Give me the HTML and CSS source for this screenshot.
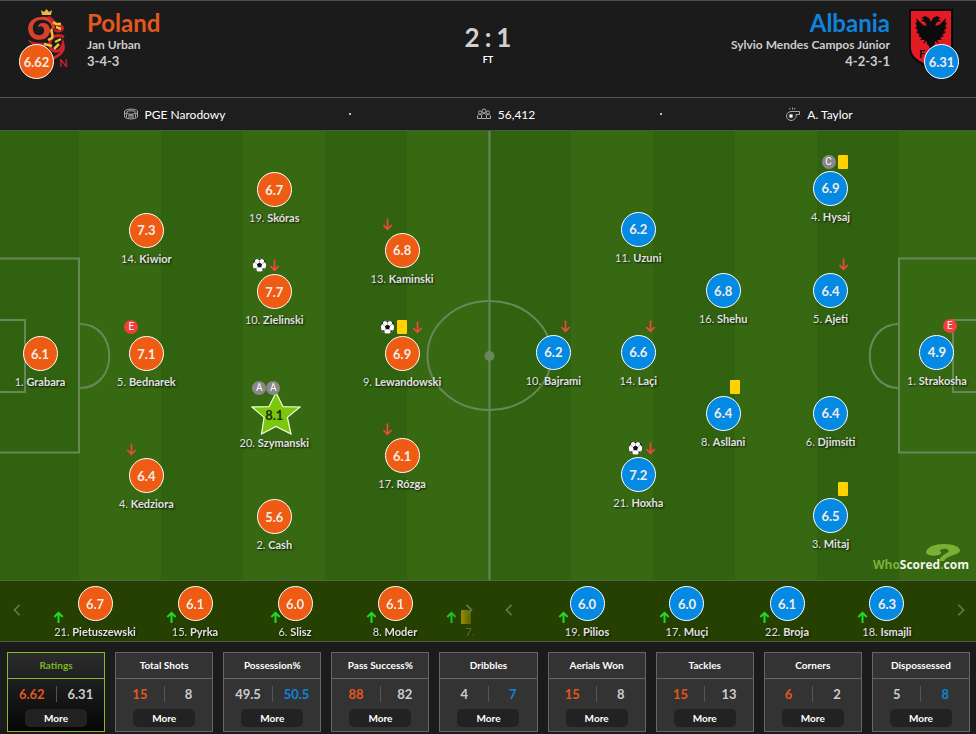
FILE: index.html
```html
<!DOCTYPE html>
<html lang="en">
<head>
  <meta charset="UTF-8">
  <meta name="viewport" content="width=device-width, initial-scale=1">
  <title>Poland 2:1 Albania</title>
  <link rel="stylesheet" href="styles.css">
</head>
<body>
  <!-- shared icons -->
  <svg class="sprite" aria-hidden="true">
    <symbol id="ball" viewBox="0 0 14 14">
      <circle cx="7" cy="7" r="6.6" fill="#fff"/>
      <path fill="#111" d="M7 4.4l2.6 1.9-1 3H5.4l-1-3zM4.6.9L7 2l2.4-1.1L7 .4zM.5 5.2L2.4 3.8 2.7 1.6.9 3.6zM13.5 5.2l-1.9-1.4-.3-2.2 1.8 2zM1.3 10.3l2.3.3.9 2.3-2.2-1.3zM12.7 10.3l-2.3.3-.9 2.3 2.2-1.3z"/>
      <path stroke="#666" stroke-width=".5" d="M7 2v2.4M2.4 3.8l2 2.5M11.6 3.8l-2 2.5M3.6 10.6l1.8-1.3M10.4 10.6L8.6 9.3"/>
    </symbol>
    <symbol id="down" viewBox="0 0 14 14">
      <path fill="none" stroke="#f0483a" stroke-width="1.7" d="M7 1.500v10.500M2.800 8L7 12.200 11.200 8"/>
    </symbol>
    <symbol id="up" viewBox="0 0 14 14">
      <path fill="none" stroke="#1fdc28" stroke-width="2" d="M7 13V3M2.800 7L7 2.800 11.200 7"/>
    </symbol>
    <symbol id="star" viewBox="0 0 50 44">
      <path fill="#7ac70c" stroke="#f2ffe0" stroke-width="1.2" d="M25 1.5l7 14.2 17 .3-12.6 10.4L40 43 25 35.5 10.5 43l2.6-16.6L1 16l17-.3z"/>
    </symbol>
  </svg>

  <header class="match-header">
    <div class="team">
      <div class="badge">
        <svg class="crest" viewBox="0 0 44 60" aria-label="Poland crest">
          <path fill="#f0b840" d="M17 1l3 2 2.500-3L25 3l3-2-1 5h-9z"/>
          <path fill="#d9402f" d="M17 8C7 8 2 16 5 24c3 8 14 9 19 3 4-5 2-13-5-13-3 0-5 2-5 4 4-2 7 1 6 5-2 5-10 4-11-2C8 15 12 10 20 11c6 1 8 5 8 10l3-2C31 11 26 7 17 8z"/>
          <path fill="#c81f2b" d="M24 7c5 0 6 6 11 8 4 1 5 2 5 5-1 4-8 5-11 1l2-1c2 2 6 1 6-1 0-2-9-1-13-12zM5 31c6 4 11 2 18 3l-2 5C14 36 8 38 4 31z"/>
          <path fill="none" stroke="#cf2330" stroke-width="3" d="M40 28c-6-3-13-1-14 5-1 5 1 9 5 9 4 1 7-3 8-7 2 7-4 12-12 15"/>
          <path fill="none" stroke="#f2c22e" stroke-width="2.500" d="M29 13l3 2 5 0M32 18l5 2M28 20c-2 3 2 5 0 9l-4 2M30 40l5-5M20 35l8 2M31 33l6-3"/>
          <text class="crest-text" x="35" y="58" fill="#c91f2d">N</text>
        </svg>
        <span class="rating home badge-rating">6.62</span>
      </div>
      <div class="team-info">
        <a href="#" class="team-name home-text">Poland</a>
        <div class="manager">Jan Urban</div>
        <div class="formation">3-4-3</div>
      </div>
    </div>

    <div class="result">
      <div class="score"><span>2</span><span>:</span><span>1</span></div>
      <div class="status">FT</div>
    </div>

    <div class="team away-team">
      <div class="badge">
        <svg class="crest" viewBox="0 0 44 60" aria-label="Albania crest">
          <path fill="#e51b23" stroke="#080808" stroke-width="2" d="M1 1h42v38c0 10-10 15-21 20C11 54 1 49 1 39z"/>
          <path fill="#0b0b0b" d="M22 13l-2-4-4-2-4 2 3 1-3 2 4 1 2 4-4-1-7-7 1 5-2-1 2 5-2 0 3 4-2 1 4 3-2 1 4 2-2 2 5 0-2 4 4-3 0 3 2 2 2 5 2-5 2-2 0-3 4 3-2-4 5 0-2-2 4-2-2-1 4-3-2-1 3-4-2 0 2-5-2 1 1-5-7 7-4 1 2-4 4-1-3-2 3-1-4-2-4 2z"/>
          <text class="crest-text" x="10" y="49" fill="#0b0b0b">F</text>
        </svg>
        <span class="rating away badge-rating">6.31</span>
      </div>
      <div class="team-info">
        <a href="#" class="team-name away-text">Albania</a>
        <div class="manager">Sylvio Mendes Campos Júnior</div>
        <div class="formation">4-2-3-1</div>
      </div>
    </div>
  </header>

  <section class="match-info">
    <div class="info-item">
      <svg class="info-icon" viewBox="0 0 14 12"><path d="M.5 3C3 .5 11 .5 13.500 3v6c-2.500 2.500-10.500 2.500-13 0zM3 3.500c2-1 6-1 8 0v2c-2 1-6 1-8 0zM.5 5l2.500 1M13.500 5L11 6M5 10V7h4v3M7 7v3M2.500 6.500v3M11.500 6.500v3"/></svg>
      <span>PGE Narodowy</span>
    </div>
    <span class="dot"></span>
    <div class="info-item">
      <svg class="info-icon" viewBox="0 0 14 12"><circle cx="7" cy="3" r="2"/><circle cx="3" cy="4.500" r="1.600"/><circle cx="11" cy="4.500" r="1.600"/><path d="M4.500 10.500V8c0-3.500 5-3.500 5 0v2.500zM4 10.500H.5V9c0-2.500 2-3 3.500-2.500M10 10.500h3.500V9c0-2.500-2-3-3.500-2.500"/></svg>
      <span>56,412</span>
    </div>
    <span class="dot"></span>
    <div class="info-item">
      <svg class="info-icon whistle" viewBox="0 0 14 14"><path d="M5 4.500h8.500v3H10c1 3-2 6-5 6C-1 13-1 5 5 4.500zM4 2.500L3.500 1M6.500 2.500V.5M8.500 2.500L9 1"/><circle cx="5" cy="9" r="1.800" fill="#fff"/></svg>
      <span>A. Taylor</span>
    </div>
  </section>

  <main class="pitch">
    <svg class="pitch-lines" viewBox="0 0 976 449" preserveAspectRatio="none" aria-hidden="true">
      <path d="M489.500 0v449M0 127.500h79v194H0M0 189h25v72H0M976 127.500h-77v194h77M976 189h-23v72h23"/>
      <path d="M80 193c39 0 39 64 0 64M899 193c-39 0-39 64 0 64"/>
      <ellipse cx="489.500" cy="224.500" rx="62" ry="54.500"/>
      <circle class="spot" cx="489.500" cy="225" r="5"/>
    </svg>

    <!-- Poland -->
    <div class="player" style="left: 4.1%; top: 45.7%">
      <span class="rating home">6.1</span>
      <div class="name">1. <b>Grabara</b></div>
    </div>
    <div class="player" style="left: 15%; top: 18.2%">
      <span class="rating home">7.3</span>
      <div class="name">14. <b>Kiwior</b></div>
    </div>
    <div class="player" style="left: 15%; top: 45.7%">
      <div class="events"><i class="tag error">E</i></div>
      <span class="rating home">7.1</span>
      <div class="name">5. <b>Bednarek</b></div>
    </div>
    <div class="player" style="left: 15%; top: 72.9%">
      <div class="events"><svg class="ico"><use href="#down"/></svg></div>
      <span class="rating home">6.4</span>
      <div class="name">4. <b>Kedziora</b></div>
    </div>
    <div class="player" style="left: 28.1%; top: 9.2%">
      <span class="rating home">6.7</span>
      <div class="name">19. <b>Skóras</b></div>
    </div>
    <div class="player" style="left: 28.1%; top: 31.9%">
      <div class="events"><svg class="ico"><use href="#ball"/></svg><svg class="ico"><use href="#down"/></svg></div>
      <span class="rating home">7.7</span>
      <div class="name">10. <b>Zielinski</b></div>
    </div>
    <div class="player" style="left: 28.1%; top: 59.3%">
      <svg class="star"><use href="#star"/></svg>
      <div class="events"><i class="tag">A</i><i class="tag">A</i></div>
      <span class="rating best">8.1</span>
      <div class="name">20. <b>Szymanski</b></div>
    </div>
    <div class="player" style="left: 28.1%; top: 82%">
      <span class="rating home">5.6</span>
      <div class="name">2. <b>Cash</b></div>
    </div>
    <div class="player" style="left: 41.2%; top: 22.7%">
      <div class="events"><svg class="ico"><use href="#down"/></svg></div>
      <span class="rating home">6.8</span>
      <div class="name">13. <b>Kaminski</b></div>
    </div>
    <div class="player" style="left: 41.2%; top: 45.7%">
      <div class="events"><svg class="ico"><use href="#ball"/></svg><i class="card"></i><svg class="ico"><use href="#down"/></svg></div>
      <span class="rating home">6.9</span>
      <div class="name">9. <b>Lewandowski</b></div>
    </div>
    <div class="player" style="left: 41.2%; top: 68.4%">
      <div class="events"><svg class="ico"><use href="#down"/></svg></div>
      <span class="rating home">6.1</span>
      <div class="name">17. <b>Rózga</b></div>
    </div>

    <!-- Albania -->
    <div class="player visitor" style="left: 96%; top: 45.4%">
      <div class="events"><i class="tag error">E</i></div>
      <span class="rating away">4.9</span>
      <div class="name">1. <b>Strakosha</b></div>
    </div>
    <div class="player visitor" style="left: 85.1%; top: 8.9%">
      <div class="events"><i class="tag">C</i><i class="card"></i></div>
      <span class="rating away">6.9</span>
      <div class="name">4. <b>Hysaj</b></div>
    </div>
    <div class="player visitor" style="left: 85.1%; top: 31.7%">
      <div class="events"><svg class="ico"><use href="#down"/></svg></div>
      <span class="rating away">6.4</span>
      <div class="name">5. <b>Ajeti</b></div>
    </div>
    <div class="player visitor" style="left: 85.1%; top: 59%">
      <span class="rating away">6.4</span>
      <div class="name">6. <b>Djimsiti</b></div>
    </div>
    <div class="player visitor" style="left: 85.1%; top: 81.8%">
      <div class="events"><i class="card"></i></div>
      <span class="rating away">6.5</span>
      <div class="name">3. <b>Mitaj</b></div>
    </div>
    <div class="player visitor" style="left: 74.1%; top: 31.7%">
      <span class="rating away">6.8</span>
      <div class="name">16. <b>Shehu</b></div>
    </div>
    <div class="player visitor" style="left: 74.1%; top: 59%">
      <div class="events"><i class="card"></i></div>
      <span class="rating away">6.4</span>
      <div class="name">8. <b>Asllani</b></div>
    </div>
    <div class="player visitor" style="left: 65.4%; top: 18%">
      <span class="rating away">6.2</span>
      <div class="name">11. <b>Uzuni</b></div>
    </div>
    <div class="player visitor" style="left: 65.4%; top: 45.4%">
      <div class="events"><svg class="ico"><use href="#down"/></svg></div>
      <span class="rating away">6.6</span>
      <div class="name">14. <b>Laçi</b></div>
    </div>
    <div class="player visitor" style="left: 65.4%; top: 72.7%">
      <div class="events"><svg class="ico"><use href="#ball"/></svg><svg class="ico"><use href="#down"/></svg></div>
      <span class="rating away">7.2</span>
      <div class="name">21. <b>Hoxha</b></div>
    </div>
    <div class="player visitor" style="left: 56.7%; top: 45.4%">
      <div class="events"><svg class="ico"><use href="#down"/></svg></div>
      <span class="rating away">6.2</span>
      <div class="name">10. <b>Bajrami</b></div>
    </div>

    <div class="watermark">
      <svg class="swirl" viewBox="0 0 36 18" aria-hidden="true"><path fill="#7cb035" d="M0 8C2 3 9 0 19 0c10 0 17 3 17 7 0 5-14 5-17 11h-5c1-7 11-8 10-11-1-3-9-2-9 0 0 2 2 2 1 3-2 2-8 3-12 2-3-1-4-2-4-4z"/></svg>
      <span class="green">Who</span>Scored<span class="green">.</span>com
    </div>
  </main>

  <section class="bench">
    <div class="bench-side">
      <button class="nav prev" aria-label="Previous substitutes"><svg viewBox="0 0 8 14"><path d="M7 1L1 7l6 6"/></svg></button>
      <div class="track fade">
        <div class="slot"><div class="sub">
          <div class="sub-events"><svg class="ico"><use href="#up"/></svg></div>
          <span class="rating home">6.7</span>
          <div class="name">21. <b>Pietuszewski</b></div>
        </div></div>
        <div class="slot"><div class="sub">
          <div class="sub-events"><svg class="ico"><use href="#up"/></svg></div>
          <span class="rating home">6.1</span>
          <div class="name">15. <b>Pyrka</b></div>
        </div></div>
        <div class="slot"><div class="sub">
          <div class="sub-events"><svg class="ico"><use href="#up"/></svg></div>
          <span class="rating home">6.0</span>
          <div class="name">6. <b>Slisz</b></div>
        </div></div>
        <div class="slot"><div class="sub">
          <div class="sub-events"><svg class="ico"><use href="#up"/></svg></div>
          <span class="rating home">6.1</span>
          <div class="name">8. <b>Moder</b></div>
        </div></div>
        <div class="slot"><div class="sub">
          <div class="sub-events"><svg class="ico"><use href="#up"/></svg><i class="card"></i></div>
          <span class="rating home">6.0</span>
          <div class="name">7. <b>Swiderski</b></div>
        </div></div>
      </div>
      <button class="nav next" aria-label="Next substitutes"><svg viewBox="0 0 8 14"><path d="M1 1l6 6-6 6"/></svg></button>
    </div>

    <div class="bench-side">
      <button class="nav prev" aria-label="Previous substitutes"><svg viewBox="0 0 8 14"><path d="M7 1L1 7l6 6"/></svg></button>
      <div class="track">
        <div class="slot"><div class="sub">
          <div class="sub-events"><svg class="ico"><use href="#up"/></svg></div>
          <span class="rating away">6.0</span>
          <div class="name">19. <b>Pilios</b></div>
        </div></div>
        <div class="slot"><div class="sub">
          <div class="sub-events"><svg class="ico"><use href="#up"/></svg></div>
          <span class="rating away">6.0</span>
          <div class="name">17. <b>Muçi</b></div>
        </div></div>
        <div class="slot"><div class="sub">
          <div class="sub-events"><svg class="ico"><use href="#up"/></svg></div>
          <span class="rating away">6.1</span>
          <div class="name">22. <b>Broja</b></div>
        </div></div>
        <div class="slot"><div class="sub">
          <div class="sub-events"><svg class="ico"><use href="#up"/></svg></div>
          <span class="rating away">6.3</span>
          <div class="name">18. <b>Ismajli</b></div>
        </div></div>
      </div>
      <button class="nav next" aria-label="Next substitutes"><svg viewBox="0 0 8 14"><path d="M1 1l6 6-6 6"/></svg></button>
    </div>
  </section>

  <section class="stats">
    <div class="stat selected">
      <h3>Ratings</h3>
      <div class="values"><span class="home-text">6.62</span><span>6.31</span></div>
      <button class="more">More</button>
    </div>
    <div class="stat">
      <h3>Total Shots</h3>
      <div class="values"><span class="home-text">15</span><span>8</span></div>
      <button class="more">More</button>
    </div>
    <div class="stat">
      <h3>Possession%</h3>
      <div class="values"><span>49.5</span><span class="away-text">50.5</span></div>
      <button class="more">More</button>
    </div>
    <div class="stat">
      <h3>Pass Success%</h3>
      <div class="values"><span class="home-text">88</span><span>82</span></div>
      <button class="more">More</button>
    </div>
    <div class="stat">
      <h3>Dribbles</h3>
      <div class="values"><span>4</span><span class="away-text">7</span></div>
      <button class="more">More</button>
    </div>
    <div class="stat">
      <h3>Aerials Won</h3>
      <div class="values"><span class="home-text">15</span><span>8</span></div>
      <button class="more">More</button>
    </div>
    <div class="stat">
      <h3>Tackles</h3>
      <div class="values"><span class="home-text">15</span><span>13</span></div>
      <button class="more">More</button>
    </div>
    <div class="stat">
      <h3>Corners</h3>
      <div class="values"><span class="home-text">6</span><span>2</span></div>
      <button class="more">More</button>
    </div>
    <div class="stat">
      <h3>Dispossessed</h3>
      <div class="values"><span>5</span><span class="away-text">8</span></div>
      <button class="more">More</button>
    </div>
  </section>
</body>
</html>
```
FILE: styles.css
```css
* {
  box-sizing: border-box;
}

body {
  margin: 0;
  background: #1b1b1b;
  color: #ccc;
  font-family: Lato, sans-serif;
  font-size: 12px;
}

.sprite {
  position: absolute;
  width: 0;
  height: 0;
}

button {
  font-family: inherit;
  border: none;
  cursor: pointer;
}

.home-text {
  color: #e2581f;
}

.away-text {
  color: #0f83dc;
}

/* header */
.match-header {
  display: grid;
  grid-template-columns: 1fr auto 1fr;
  height: 98px;
  border-top: 1px solid #4d4d4d;
  border-bottom: 1px solid #555;
}

.team {
  display: flex;
  gap: 19px;
  padding: 8px 23px 8px 24px;
}

.away-team {
  flex-direction: row-reverse;
  text-align: right;
}

.badge {
  position: relative;
  width: 44px;
  height: 60px;
}

.crest {
  display: block;
  width: 100%;
  height: 100%;
}

.crest-text {
  font-size: 11px;
  font-weight: bold;
}

.badge-rating {
  position: absolute;
  top: 35px;
  left: -5px;
}

.away-team .badge-rating {
  left: 15px;
}

.team-name {
  display: block;
  font-size: 24px;
  line-height: 28px;
  font-weight: bold;
  text-decoration: none;
}

.manager,
.formation {
  line-height: 16px;
  font-weight: bold;
}

.formation {
  font-size: 13px;
}

.result {
  padding-top: 20px;
  text-align: center;
  font-weight: bold;
}

.score {
  display: flex;
  gap: 5px;
  justify-content: center;
  font-size: 26px;
  line-height: 32px;
  color: #d5d0d0;
}

.status {
  font-size: 9px;
  line-height: 14px;
  color: #fff;
}

/* stadium, attendance, referee */
.match-info {
  display: grid;
  grid-template-columns: 349fr 3px 308fr 3px 313fr;
  align-items: center;
  height: 32px;
  background: #1e1e1e;
  color: #fff;
}

.info-item {
  display: flex;
  justify-content: center;
  align-items: center;
  gap: 7px;
  font-size: 12px;
}

.info-icon {
  width: 14px;
  height: 12px;
  fill: none;
  stroke: #aaa;
  stroke-width: 1;
}

.whistle {
  height: 14px;
}

.dot {
  width: 2px;
  height: 2px;
  background: #bbb;
}

/* pitch */
.pitch {
  position: relative;
  height: 451px;
  border-top: 1px solid #4b5a3a;
  border-bottom: 1px solid #56634b;
  background: repeating-linear-gradient(90deg, #30620f 0 82px, #376812 82px 164px) calc(50% + 83px) 0 / 1148px 100%;
}

.pitch-lines {
  display: block;
  width: 100%;
  height: 100%;
  fill: none;
  stroke: #68885a;
  stroke-width: 2;
}

.spot {
  fill: #68885a;
  stroke: none;
}

.player {
  position: absolute;
  display: flex;
  flex-direction: column;
  align-items: center;
  width: 36px;
  transform: translateX(-50%);
}

.rating {
  display: flex;
  justify-content: center;
  align-items: center;
  width: 35px;
  height: 35px;
  border: 1px solid #fff;
  border-radius: 50%;
  color: #f4ece8;
  font-size: 13px;
  font-weight: bold;
}

.home {
  background: #ee5c13;
}

.away {
  background: #058ae4;
}

.best {
  position: relative;
  border-color: transparent;
  color: #1d2b08;
}

.star {
  position: absolute;
  top: -6px;
  left: -5px;
  width: 50px;
  height: 44px;
}

.name {
  margin-top: 3px;
  font-size: 11px;
  line-height: 16px;
  color: #e2e2e2;
  white-space: nowrap;
  text-shadow: 1px 1px 2px rgba(0, 0, 0, 0.8);
}

.events {
  position: absolute;
  bottom: 100%;
  left: -4px;
  display: flex;
  align-items: center;
  height: 18px;
}

.visitor .events {
  left: auto;
  right: -2px;
}

.ico {
  width: 15px;
  height: 14px;
}

.card {
  width: 10px;
  height: 14px;
  margin: 0 3px 0 2px;
  border-radius: 1px;
  background: #ffd200;
}

.tag {
  width: 14px;
  height: 14px;
  border-radius: 50%;
  background: #888;
  color: #fff;
  font: normal 10px/14px Roboto, sans-serif;
  text-align: center;
}

.error {
  background: #f43d3d;
}

.watermark {
  position: absolute;
  right: 7px;
  bottom: 7px;
  color: #f0f5e8;
  font: bold 12px/16px "Open Sans", sans-serif;
}

.green {
  color: #7cb035;
}

.swirl {
  position: absolute;
  right: 8px;
  bottom: 12px;
  width: 36px;
  height: 17px;
}

/* substitutes */
.bench {
  display: grid;
  grid-template-columns: 1fr 1fr;
  gap: 8px;
  height: 61px;
  border-bottom: 1px solid #4f5b44;
  background: #264002;
}

.bench-side {
  position: relative;
  min-width: 0;
  padding-left: 45px;
}

.track {
  display: flex;
  height: 60px;
  overflow: hidden;
}

.fade {
  -webkit-mask-image: linear-gradient(90deg, #000 calc(100% - 38px), transparent calc(100% - 6px));
  mask-image: linear-gradient(90deg, #000 calc(100% - 38px), transparent calc(100% - 6px));
}

.slot {
  flex: 0 0 100px;
  display: flex;
  justify-content: center;
  padding-top: 5px;
}

.sub {
  position: relative;
  display: flex;
  flex-direction: column;
  align-items: center;
}

.sub-events {
  position: absolute;
  top: 24px;
  right: 85%;
  display: flex;
}

.nav {
  position: absolute;
  top: 18px;
  width: 24px;
  height: 24px;
  padding: 0;
  background: none;
}

.prev {
  left: 5px;
}

.next {
  right: 3px;
}

.nav svg {
  width: 8px;
  height: 12px;
  fill: none;
  stroke: #64764c;
  stroke-width: 2;
}

/* stat boxes */
.stats {
  display: grid;
  grid-template-columns: repeat(9, 1fr);
  gap: 10px;
  padding: 10px 6px 2px 7px;
}

.stat {
  display: flex;
  flex-direction: column;
  align-items: center;
  border: 1px solid #666;
  background: #333;
}

.stat h3 {
  width: 100%;
  margin: 0;
  border-bottom: 1px solid #666;
  color: #fff;
  font-size: 10px;
  line-height: 25px;
  text-align: center;
}

.values {
  display: flex;
  width: 100%;
  margin: 7px 0;
  font-size: 13px;
  line-height: 16px;
  font-weight: bold;
  text-align: center;
}

.values span {
  flex: 1;
}

.values span + span {
  border-left: 1px solid #555;
}

.more {
  width: 62px;
  height: 18px;
  margin-bottom: 4px;
  padding: 0;
  border-radius: 5px;
  background: #222;
  color: #fff;
  font-size: 10px;
  line-height: 16px;
  font-weight: bold;
}

.selected {
  border-color: #86b82c;
  background: linear-gradient(#2c2c2c, #050505);
}

.selected h3 {
  border-color: #86b82c;
  color: #78b81e;
}
```
